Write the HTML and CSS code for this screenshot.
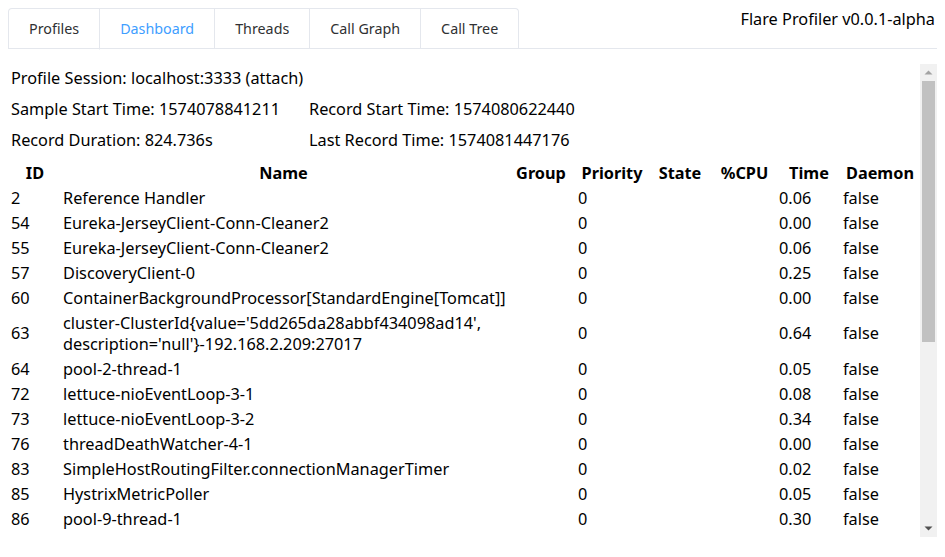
FILE: index.html
```html
<!DOCTYPE html>
<html>
<head>
<meta charset="utf-8">
<link rel="stylesheet" href="styles.css">
</head>
<body>
<div class="header">
  <div class="tabs">
    <div class="tab">Profiles</div>
    <div class="tab active">Dashboard</div>
    <div class="tab">Threads</div>
    <div class="tab">Call Graph</div>
    <div class="tab">Call Tree</div>
  </div>
  <div class="title">Flare Profiler v0.0.1-alpha</div>
</div>
<div class="panel">
  <div class="content">
    <div class="info">
      <div class="info-row"><span>Profile Session: localhost:3333 (attach)</span></div>
      <div class="info-row"><span class="c1">Sample Start Time: 1574078841211</span><span>Record Start Time: 1574080622440</span></div>
      <div class="info-row"><span class="c1">Record Duration: 824.736s</span><span>Last Record Time: 1574081447176</span></div>
    </div>
    <table class="threads">
      <colgroup>
        <col class="w-id"><col class="w-name"><col class="w-group"><col class="w-prio"><col class="w-state"><col class="w-cpu"><col class="w-time"><col class="w-daemon">
      </colgroup>
      <thead>
        <tr><th>ID</th><th>Name</th><th>Group</th><th>Priority</th><th>State</th><th>%CPU</th><th>Time</th><th>Daemon</th></tr>
      </thead>
      <tbody>
        <tr><td>2</td><td>Reference Handler</td><td></td><td>0</td><td></td><td></td><td>0.06</td><td>false</td></tr>
        <tr><td>54</td><td>Eureka-JerseyClient-Conn-Cleaner2</td><td></td><td>0</td><td></td><td></td><td>0.00</td><td>false</td></tr>
        <tr><td>55</td><td>Eureka-JerseyClient-Conn-Cleaner2</td><td></td><td>0</td><td></td><td></td><td>0.06</td><td>false</td></tr>
        <tr><td>57</td><td>DiscoveryClient-0</td><td></td><td>0</td><td></td><td></td><td>0.25</td><td>false</td></tr>
        <tr><td>60</td><td>ContainerBackgroundProcessor[StandardEngine[Tomcat]]</td><td></td><td>0</td><td></td><td></td><td>0.00</td><td>false</td></tr>
        <tr><td>63</td><td>cluster-ClusterId{value='5dd265da28abbf434098ad14', description='null'}-192.168.2.209:27017</td><td></td><td>0</td><td></td><td></td><td>0.64</td><td>false</td></tr>
        <tr><td>64</td><td>pool-2-thread-1</td><td></td><td>0</td><td></td><td></td><td>0.05</td><td>false</td></tr>
        <tr><td>72</td><td>lettuce-nioEventLoop-3-1</td><td></td><td>0</td><td></td><td></td><td>0.08</td><td>false</td></tr>
        <tr><td>73</td><td>lettuce-nioEventLoop-3-2</td><td></td><td>0</td><td></td><td></td><td>0.34</td><td>false</td></tr>
        <tr><td>76</td><td>threadDeathWatcher-4-1</td><td></td><td>0</td><td></td><td></td><td>0.00</td><td>false</td></tr>
        <tr><td>83</td><td>SimpleHostRoutingFilter.connectionManagerTimer</td><td></td><td>0</td><td></td><td></td><td>0.02</td><td>false</td></tr>
        <tr><td>85</td><td>HystrixMetricPoller</td><td></td><td>0</td><td></td><td></td><td>0.05</td><td>false</td></tr>
        <tr><td>86</td><td>pool-9-thread-1</td><td></td><td>0</td><td></td><td></td><td>0.30</td><td>false</td></tr>
      </tbody>
    </table>
  </div>
  <div class="scrollbar">
    <div class="sb-btn"><svg width="9" height="5" viewBox="0 0 9 5"><path d="M0.5 4.5 L4.5 0.5 L8.5 4.5 Z" fill="#a3a3a3"/></svg></div>
    <div class="sb-track"><div class="sb-thumb"></div></div>
    <div class="sb-btn"><svg width="9" height="5" viewBox="0 0 9 5"><path d="M0.5 0.5 L4.5 4.5 L8.5 0.5 Z" fill="#505050"/></svg></div>
  </div>
</div>
</body>
</html>
```

FILE: styles.css
```css
html, body {
  margin: 0;
  padding: 0;
  background: #fff;
}
body {
  margin: 8px;
  font-family: "Noto Sans", sans-serif;
  color: #000;
}
.header {
  display: flex;
  justify-content: space-between;
  align-items: flex-start;
  border-bottom: 1px solid #e4e7ed;
  height: 40px;
  margin-bottom: 15px;
}
.tabs {
  display: flex;
  border: 1px solid #e4e7ed;
  border-bottom: none;
  border-radius: 4px 4px 0 0;
  height: 40px;
  box-sizing: border-box;
}
.tab {
  padding: 0 20px;
  height: 40px;
  line-height: 40px;
  font-size: 14.3px;
  color: #303133;
  border-left: 1px solid #e4e7ed;
  box-sizing: border-box;
  border-bottom: 1px solid transparent;
}
.tab:first-child {
  border-left: none;
}
.tab.active {
  color: #409eff;
  border-bottom: 1px solid #fff;
  height: 41px;
  margin-bottom: -1px;
}
.title {
  font-size: 16.3px;
  line-height: 22px;
  margin-right: 2px;
}
.panel {
  display: flex;
  height: 473px;
}
.content {
  flex: 1;
  overflow: hidden;
  font-size: 16.3px;
}
.info {
  padding-top: 3px;
  padding-left: 3px;
}
.info-row {
  display: flex;
  line-height: 22px;
  margin-bottom: 9px;
}
.info-row .c1 {
  width: 298px;
}
.threads {
  width: 100%;
  table-layout: fixed;
  border-spacing: 2px;
  margin-top: -0.5px;
}
.threads th, .threads td {
  padding: 1px;
  line-height: 21px;
  vertical-align: middle;
}
.threads th {
  font-weight: bold;
  text-align: center;
}
.threads td {
  text-align: left;
}
.w-id { width: 50px; }
.w-name { width: 443px; }
.w-group { width: 68px; }
.w-prio { width: 70px; }
.w-state { width: 62px; }
.w-cpu { width: 63px; }
.w-time { width: 62px; }
.w-daemon { width: 76px; }
.scrollbar {
  width: 17px;
  background: #f1f1f1;
  display: flex;
  flex-direction: column;
}
.sb-btn {
  height: 17px;
  display: flex;
  align-items: center;
  justify-content: center;
}
.sb-track {
  flex: 1;
  padding: 0 2px;
}
.sb-thumb {
  height: 261px;
  background: #c1c1c1;
}
```
